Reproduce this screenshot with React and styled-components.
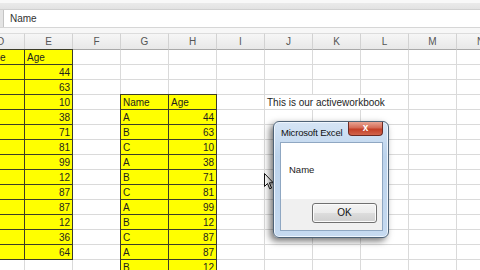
import React from "react"
import styled, { createGlobalStyle } from "styled-components"

const GlobalStyle = createGlobalStyle`
  html, body {
    margin: 0;
    padding: 0;
    background: #ffffff;
    overflow: hidden;
  }
  body {
    font-family: "Liberation Sans", Arial, sans-serif;
  }
`

const Screen = styled.div`
  position: relative;
  width: 480px;
  height: 270px;
  overflow: hidden;
  background: #ffffff;
  display: flex;
  flex-direction: column;
  & > * {
    flex-shrink: 0;
  }
`

const TopStrip = styled.div`
  height: 9px;
  background: linear-gradient(#eeeeee, #e2e2e2);
  border-bottom: 1px solid #d0d0d0;
  box-shadow: inset 0 3px 0 #f8f8f8;
`

const FormulaRow = styled.div`
  height: 17px;
  display: flex;
  background: #f3f3f3;
  border-bottom: 1px solid #d6d6d6;
`

const FormulaGrip = styled.div`
  width: 3px;
  background: #e4e4e4;
  border-right: 1px solid #c4c4c4;
`

const FormulaInput = styled.div`
  flex: 1;
  background: #ffffff;
  padding-left: 6px;
  font-size: 10px;
  line-height: 17px;
  color: #333333;
`

const Gap = styled.div`
  height: 5px;
  background: #f7f7f7;
`

const Sheet = styled.div`
  display: grid;
  grid-template-columns: repeat(11, 48px);
  grid-template-rows: 17px;
  grid-auto-rows: 15px;
  margin-left: -23px;
  font-size: 10px;
  color: #1e1e1e;
`

const ColHead = styled.div`
  background: linear-gradient(#f6f6f6, #e8e8e8);
  border-right: 1px solid #d2d2d2;
  border-bottom: 1px solid #a9a9a9;
  border-top: 1px solid #dcdcdc;
  box-sizing: border-box;
  text-align: center;
  line-height: 15px;
  color: #555555;
  font-size: 10px;
`

const Cell = styled.div`
  box-sizing: border-box;
  padding: 0 2px;
  line-height: 15px;
  white-space: nowrap;
  overflow: ${(p) => (p.$spill ? "visible" : "hidden")};
  text-align: ${(p) => (p.$num ? "right" : "left")};
  background: ${(p) => (p.$fill ? "#ffff00" : "transparent")};
  border-right: 1px solid
    ${(p) => (p.$fill ? "#3c3c28" : p.$open ? "transparent" : "#dadada")};
  border-bottom: 1px solid ${(p) => (p.$fill ? "#3c3c28" : "#dadada")};
  box-shadow: ${(p) =>
    p.$fill ? "-1px 0 0 #3c3c28, 0 -1px 0 #3c3c28, -1px -1px 0 #3c3c28" : "none"};
  position: ${(p) => (p.$spill ? "relative" : "static")};
  z-index: ${(p) => (p.$spill ? 1 : "auto")};
`

const Dialog = styled.div`
  position: absolute;
  left: 273px;
  top: 121px;
  width: 116px;
  height: 117px;
  box-sizing: border-box;
  border: 1px solid #4f6377;
  border-radius: 6px;
  background: linear-gradient(#d6e5f5, #bcd3ec 30%, #c6daf0);
  box-shadow: -3px 3px 7px rgba(0, 0, 0, 0.55), inset 0 0 0 1px #eef5fd;
  display: flex;
  flex-direction: column;
  padding: 0 5px 6px 6px;
`

const TitleBar = styled.div`
  height: 20px;
  display: flex;
  align-items: flex-start;
  justify-content: space-between;
`

const Title = styled.div`
  font-family: "Liberation Sans", Arial, sans-serif;
  font-size: 9.5px;
  line-height: 22px;
  color: #111111;
  padding-left: 1px;
  letter-spacing: -0.2px;
`

const CloseButton = styled.div`
  width: 33px;
  height: 13px;
  border: 1px solid #6d2a22;
  border-top: none;
  border-radius: 0 0 4px 4px;
  background: linear-gradient(#e8a493, #d46a55 45%, #c33f26 55%, #d2654c);
  color: #ffffff;
  font-size: 10px;
  font-weight: bold;
  text-align: center;
  line-height: 12px;
`

const Body = styled.div`
  flex: 1;
  display: flex;
  flex-direction: column;
  border: 1px solid #8fa7c2;
`

const Message = styled.div`
  height: 56px;
  background: #ffffff;
  padding-left: 8px;
  font-size: 9.5px;
  line-height: 54px;
  color: #1a1a1a;
`

const ButtonBar = styled.div`
  flex: 1;
  background: #f0f0f0;
  display: flex;
  justify-content: flex-end;
  align-items: flex-start;
  padding: 4px 5px 0 0;
`

const OkButton = styled.div`
  width: 65px;
  height: 20px;
  box-sizing: border-box;
  border: 1px solid #707070;
  border-radius: 3px;
  background: linear-gradient(#f4f4f4, #ebebeb 50%, #dddddd 51%, #cfcfcf);
  box-shadow: inset 0 0 0 1px #fbfbfb;
  font-size: 10px;
  text-align: center;
  line-height: 18px;
  color: #111111;
`

const Pointer = styled.svg`
  position: absolute;
  left: 264px;
  top: 173px;
  width: 10px;
  height: 17px;
`

const cols = ["D", "E", "F", "G", "H", "I", "J", "K", "L", "M", "N"]

const leftTable = [
  ["Name", "Age"],
  ["A", 44],
  ["B", 63],
  ["C", 10],
  ["A", 38],
  ["B", 71],
  ["C", 81],
  ["A", 99],
  ["B", 12],
  ["C", 87],
  ["A", 87],
  ["B", 12],
  ["C", 36],
  ["A", 64],
]

const rightTable = [
  ["Name", "Age"],
  ["A", 44],
  ["B", 63],
  ["C", 10],
  ["A", 38],
  ["B", 71],
  ["C", 81],
  ["A", 99],
  ["B", 12],
  ["C", 87],
  ["A", 87],
  ["B", 12],
]

const ROWS = 15

function buildRow(r) {
  const row = cols.map(() => ({}))
  const l = leftTable[r]
  if (l) {
    row[0] = { t: l[0], fill: true }
    row[1] = { t: l[1], fill: true, num: typeof l[1] === "number" }
  }
  const rr = rightTable[r - 3]
  if (rr) {
    row[3] = { t: rr[0], fill: true }
    row[4] = { t: rr[1], fill: true, num: typeof rr[1] === "number" }
  }
  if (r === 3) {
    row[6] = { t: "This is our activeworkbook", spill: true, open: true }
    row[7] = { open: true }
  }
  return row
}

export default function App() {
  const rows = Array.from({ length: ROWS }, (_, r) => buildRow(r))
  return (
    <Screen>
      <GlobalStyle />
      <TopStrip />
      <FormulaRow>
        <FormulaGrip />
        <FormulaInput>Name</FormulaInput>
      </FormulaRow>
      <Gap />
      <Sheet>
        {cols.map((c) => (
          <ColHead key={c}>{c}</ColHead>
        ))}
        {rows.map((row, r) =>
          row.map((c, i) => (
            <Cell
              key={r + "-" + i}
              $fill={c.fill}
              $num={c.num}
              $spill={c.spill}
              $open={c.open}
            >
              {c.t}
            </Cell>
          ))
        )}
      </Sheet>

      <Pointer viewBox="0 0 10 17">
        <path
          d="M0.5 0.5 L0.5 13.5 L3.5 10.5 L5.7 15.8 L7.6 15 L5.4 9.8 L9.3 9.8 Z"
          fill="#ffffff"
          stroke="#111111"
          strokeWidth="1"
          strokeLinejoin="round"
        />
      </Pointer>

      <Dialog>
        <TitleBar>
          <Title>Microsoft Excel</Title>
          <CloseButton>x</CloseButton>
        </TitleBar>
        <Body>
          <Message>Name</Message>
          <ButtonBar>
            <OkButton>OK</OkButton>
          </ButtonBar>
        </Body>
      </Dialog>
    </Screen>
  )
}
